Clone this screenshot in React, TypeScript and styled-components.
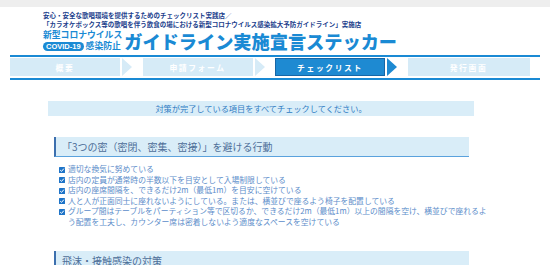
import styled, { createGlobalStyle } from "styled-components"

const GlobalStyle = createGlobalStyle`
  body {
    margin: 0;
    background: #ffffff;
    font-family: "Noto Sans CJK JP", "Noto Sans", sans-serif;
  }
`

const steps = [
  { label: "概要", width: 110 },
  { label: "申請フォーム", width: 110 },
  { label: "チェックリスト", width: 110, active: true },
  { label: "発行画面", width: 122 },
]

const items = [
  "適切な換気に努めている",
  "店内の定員が通常時の半数以下を目安として入場制限している",
  "店内の座席間隔を、できるだけ2m（最低1m）を目安に空けている",
  "人と人が正面同士に座れないようにしている。または、横並びで座るよう椅子を配置している",
  "グループ間はテーブルをパーティション等で区切るか、できるだけ2m（最低1m）以上の間隔を空け、横並びで座れるよう配置を工夫し、カウンター席は密着しないよう適度なスペースを空けている",
]

export default function App() {
  return (
    <>
      <GlobalStyle />
      <TopBar />
      <Header>
        <Lead>安心・安全な歌唱環境を提供するためのチェックリスト実践店／</Lead>
        <Lead>「カラオケボックス等の歌唱を伴う飲食の場における新型コロナウイルス感染拡大予防ガイドライン」実施店</Lead>
        <Logo>
          <LogoSide>
            <SmallTitle>新型コロナウイルス</SmallTitle>
            <SmallRow>
              <Pill>COVID-19</Pill>
              <SmallTitle>感染防止</SmallTitle>
            </SmallRow>
          </LogoSide>
          <BigTitle>ガイドライン実施宣言ステッカー</BigTitle>
        </Logo>
      </Header>

      <Steps>
        {steps.map((s, i) => (
          <Step key={s.label}>
            <StepBox $active={!!s.active} $width={s.width}>{s.label}</StepBox>
            {i < steps.length - 1 && (
              <Arrow viewBox="0 0 10 18" $active={!!s.active}>
                <path d="M0 0 L10 9 L0 18 Z" />
              </Arrow>
            )}
          </Step>
        ))}
      </Steps>

      <Content>
        <Notice>対策が完了している項目をすべてチェックしてください。</Notice>

        <Section>
          <SectionHead>「3つの密（密閉、密集、密接）」を避ける行動</SectionHead>
          <List>
            {items.map((t) => (
              <Item key={t}>
                <Check viewBox="0 0 6 6">
                  <rect width="6" height="6" rx="0.6" />
                  <path d="M1.2 3.1 L2.5 4.4 L4.9 1.6" />
                </Check>
                <span>{t}</span>
              </Item>
            ))}
          </List>
        </Section>

        <Section>
          <SectionHead>飛沫・接触感染の対策</SectionHead>
        </Section>
      </Content>
    </>
  )
}

const TopBar = styled.div`
  height: 7px;
  background: #eeeeee;
`

const Header = styled.header`
  padding: 4px 0 0 43px;
  color: #21408c;
`

const Lead = styled.div`
  font-size: 6.5px;
  line-height: 8.5px;
  font-weight: 700;
  white-space: nowrap;
`

const Logo = styled.div`
  display: flex;
  align-items: flex-end;
  gap: 2px;
  margin-top: 2px;
  color: #1a8ad4;
`

const LogoSide = styled.div`
  display: flex;
  flex-direction: column;
  gap: 1px;
`

const SmallTitle = styled.span`
  font-size: 8.8px;
  line-height: 10px;
  font-weight: 700;
  white-space: nowrap;
`

const SmallRow = styled.div`
  display: flex;
  align-items: center;
  gap: 2px;
`

const Pill = styled.span`
  background: #1a8ad4;
  color: #ffffff;
  font-family: "Liberation Sans", "Noto Sans", sans-serif;
  font-weight: 700;
  font-size: 7.5px;
  line-height: 9px;
  padding: 0 3px;
  border-radius: 5px;
`

const BigTitle = styled.div`
  font-size: 18.2px;
  line-height: 22px;
  font-weight: 900;
  white-space: nowrap;
  margin-bottom: -1px;
`

const Steps = styled.nav`
  margin: 4px 10px 0;
  border-top: 2px solid #1a8ad4;
  border-bottom: 2px solid #1a8ad4;
  padding: 1px 0 2px;
  display: flex;
`

const Step = styled.div`
  display: flex;
  align-items: center;
  gap: 2px;
  flex: 0 0 auto;
  &:not(:last-child) {
    width: 132.5px;
  }
`

const StepBox = styled.div<{ $active: boolean; $width: number }>`
  width: ${(p) => p.$width}px;
  height: 18px;
  box-sizing: border-box;
  display: flex;
  align-items: center;
  justify-content: center;
  background: ${(p) => (p.$active ? "#1e8ad2" : "#d6ebf7")};
  border: 1px solid ${(p) => (p.$active ? "#1766a6" : "#d6ebf7")};
  color: #ffffff;
  font-size: 7.8px;
  font-weight: 700;
  letter-spacing: 1.6px;
`

const Arrow = styled.svg<{ $active: boolean }>`
  width: 10px;
  height: 18px;
  fill: ${(p) => (p.$active ? "#1e8ad2" : "#d6ebf7")};
`

const Content = styled.main`
  margin: 21px 0 0 48px;
  width: 426px;
`

const Notice = styled.div`
  height: 15px;
  background: #d9edf8;
  color: #2f7cc3;
  font-size: 8.2px;
  line-height: 15px;
  text-align: center;
`

const Section = styled.section`
  margin: 21px 5px 0 6px;
  & + & {
    margin-top: 23px;
  }
`

const SectionHead = styled.div`
  height: 20px;
  box-sizing: border-box;
  background: #d9edf8;
  border-left: 2px solid #3c6fae;
  border-bottom: 1px solid #5aa2dd;
  color: #4e6f98;
  font-size: 10px;
  line-height: 19px;
  padding-left: 6px;
  white-space: nowrap;
`

const List = styled.ul`
  list-style: none;
  margin: 7px 0 0;
  padding: 0 0 0 5px;
`

const Item = styled.li`
  display: flex;
  gap: 3px;
  color: #5c8dca;
  font-size: 7.8px;
  line-height: 10.6px;
  width: 430px;
`

const Check = styled.svg`
  flex: 0 0 6px;
  width: 6px;
  height: 6px;
  margin-top: 2.5px;
  rect {
    fill: #1e74c8;
  }
  path {
    fill: none;
    stroke: #ffffff;
    stroke-width: 1;
  }
`
